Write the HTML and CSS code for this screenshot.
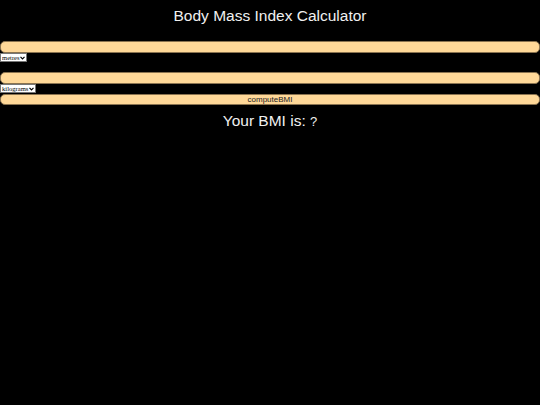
FILE: index.html
```html
<!DOCTYPE html>
<html>
<head>
<meta charset="utf-8">
<link rel="stylesheet" href="styles.css">
</head>
<body>
<h1 class="title">Body Mass Index Calculator</h1>
<div class="field">
  <input class="num" type="text">
  <span class="unit">
    <select class="unit-select"><option>metres</option></select>
    <svg class="chev" width="5" height="4" viewBox="0 0 5 4"><path d="M0.5 0.8 L2.5 2.8 L4.5 0.8" fill="none" stroke="#000" stroke-width="1.2"/></svg>
  </span>
</div>
<div class="field">
  <input class="num" type="text">
  <span class="unit">
    <select class="unit-select"><option>kilograms</option></select>
    <svg class="chev" width="5" height="4" viewBox="0 0 5 4"><path d="M0.5 0.8 L2.5 2.8 L4.5 0.8" fill="none" stroke="#000" stroke-width="1.2"/></svg>
  </span>
</div>
<button class="compute">computeBMI</button>
<p class="result">Your BMI is: <span class="value">?</span></p>
</body>
</html>
```
FILE: styles.css
```css
html, body {
  margin: 0;
  background: #000;
  color: #f0f0f0;
  font-family: "Liberation Sans", Arial, sans-serif;
}
.title {
  font-size: 15.5px;
  font-weight: normal;
  text-align: center;
  margin: 6px 0 16px;
  line-height: 19px;
}
.field {
  display: flex;
  flex-direction: column;
  align-items: flex-start;
}
.field + .field {
  margin-top: 10px;
}
.num {
  box-sizing: border-box;
  width: 100%;
  height: 12px;
  margin: 0;
  padding: 0;
  background: #ffd898;
  border: 1px solid #8a7350;
  border-radius: 5px;
}
.unit {
  display: inline-flex;
  align-items: center;
  gap: 0;
  height: 9px;
  box-sizing: border-box;
  margin-top: 0;
  padding: 0 1px 0 1px;
  background: #fff;
  border: 1px solid #767676;
}
.unit-select {
  appearance: none;
  -webkit-appearance: none;
  font-family: "Liberation Serif", serif;
  font-size: 6.6px;
  line-height: 7px;
  height: 7px;
  margin: 0;
  padding: 0;
  border: 0;
  background: transparent;
  color: #000;
}
.chev {
  display: block;
}
.compute {
  display: block;
  box-sizing: border-box;
  width: 100%;
  height: 11px;
  margin: 1px 0 0;
  padding: 0;
  background: #ffd898;
  border: 1px solid #8a7350;
  border-radius: 5px;
  font-family: "Liberation Sans", Arial, sans-serif;
  font-size: 8px;
  line-height: 9px;
  color: #222;
}
.result {
  text-align: center;
  font-size: 15.5px;
  line-height: 20px;
  margin: 6px 0 0;
}
.value {
  font-size: 13px;
}
```
